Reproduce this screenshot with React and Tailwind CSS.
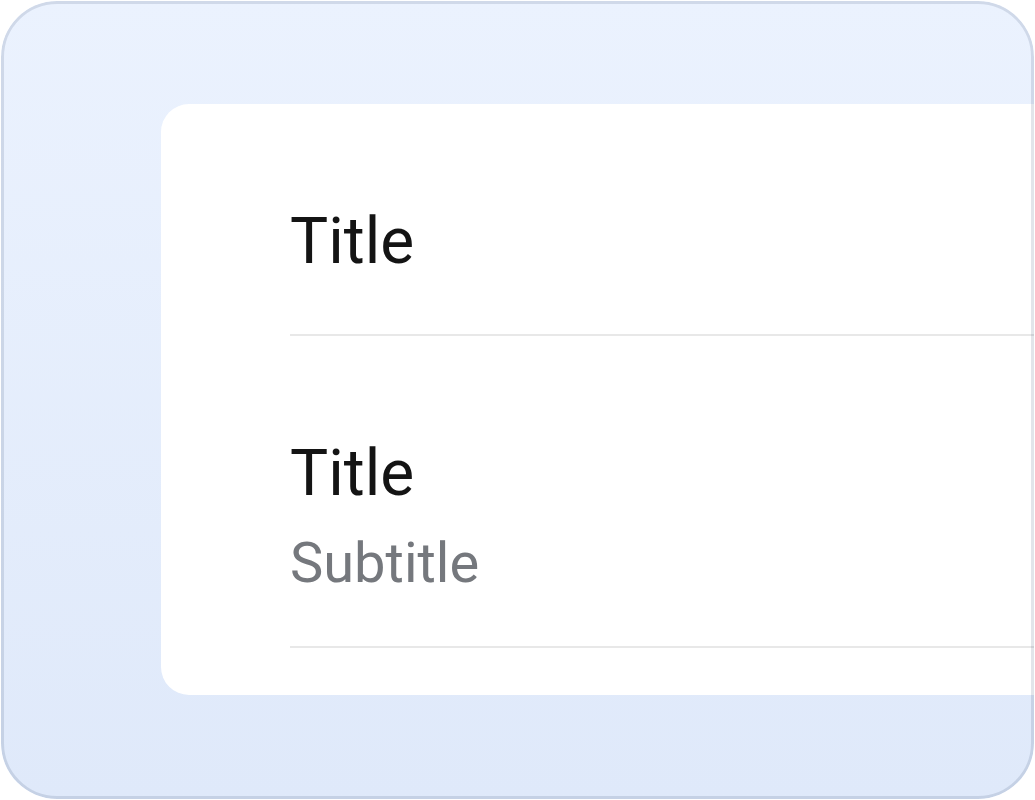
const items = [
  { title: "Title" },
  { title: "Title", subtitle: "Subtitle" },
];

const ListItem = ({ title, subtitle, first }) => (
  <div className="border-b-2 border-[#e8e8e8]">
    <div className={first ? "pt-[100px] pb-[54px]" : "pt-[100px] pb-[50px]"}>
      <div className="text-[64px] leading-[76px] text-[#141414]">{title}</div>
      {subtitle && (
        <div className="mt-[18px] text-[56px] leading-[66px] text-[#75787d]">{subtitle}</div>
      )}
    </div>
  </div>
);

export default function App() {
  return (
    <div className="bg-white w-[1035px] h-[800px] p-[1px]" style={{ fontFamily: "Roboto, 'Noto Sans', sans-serif" }}>
      <div className="relative w-[1033px] h-[798px] rounded-[56px] overflow-hidden bg-gradient-to-b from-[#ebf2fe] to-[#dfe9fa]">
        <div className="pt-[103px] pl-[160px]">
          <div className="bg-white rounded-l-[28px] pl-[129px] pb-[47px] w-[900px]">
            {items.map((it, i) => (
              <ListItem key={i} {...it} first={i === 0} />
            ))}
          </div>
        </div>
        {/* frame outline drawn above the card */}
        <div className="pointer-events-none absolute inset-0 rounded-[56px] border-[3px] border-[rgba(20,40,80,0.12)]" />
      </div>
    </div>
  );
}
